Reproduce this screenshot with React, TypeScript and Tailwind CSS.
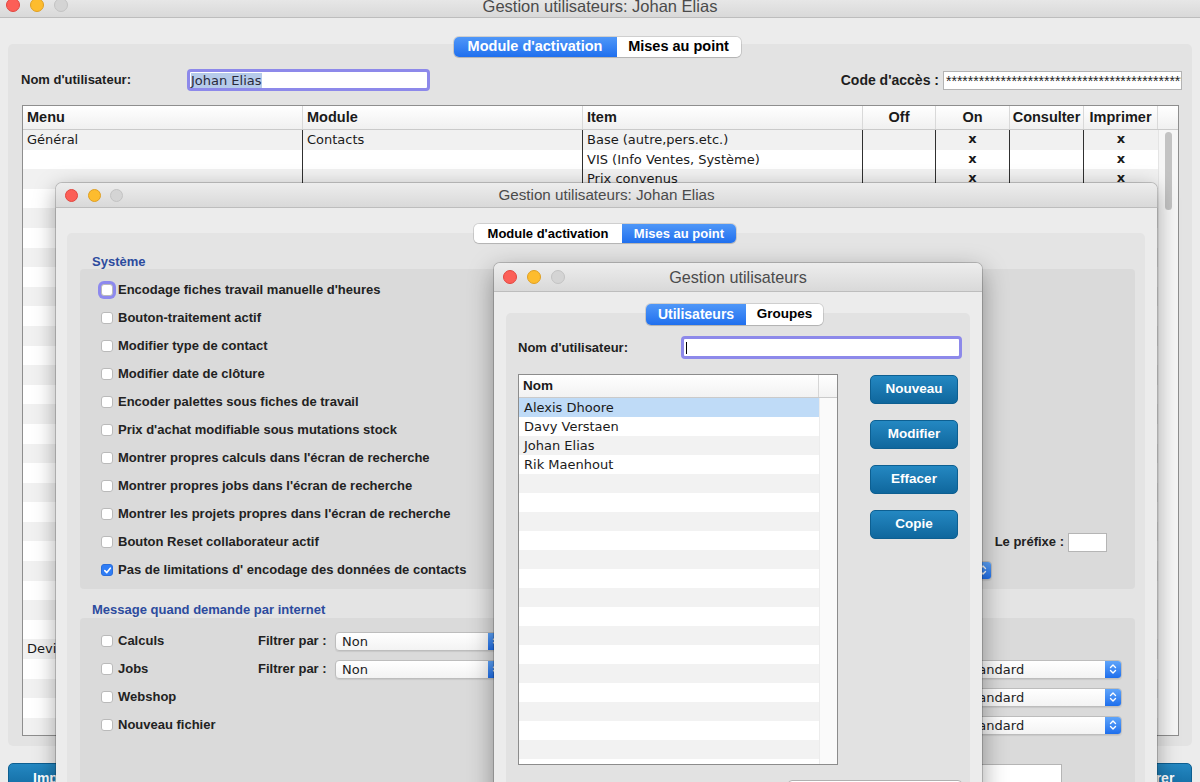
import React from "react";

const B = "font-['Liberation_Sans',Arial,sans-serif] font-bold";
const R = "font-['DejaVu_Sans',Verdana,sans-serif]";
const T = "font-['Liberation_Sans',Arial,sans-serif]";

function Lights({ size, gap }: { size: string; gap: string }) {
  return (
    <div className={`flex items-center ${gap}`}>
      <span className={`${size} rounded-full bg-[#fc5f57] border border-[#e2463f]`} />
      <span className={`${size} rounded-full bg-[#fdbc2e] border border-[#df9f23]`} />
      <span className={`${size} rounded-full bg-[#d4d4d4] border border-[#c3c3c3]`} />
    </div>
  );
}

function TitleBar({ title, h, size, gap, pl, text, shift = "" }: { title: string; h: string; size: string; gap: string; pl: string; text: string; shift?: string }) {
  return (
    <div className={`relative ${h} flex items-center ${pl} bg-gradient-to-b from-[#ededed] to-[#d9d9d9] border-b border-[#bdbdbd] rounded-t-[6px]`}>
      <Lights size={size} gap={gap} />
      <div className={`absolute inset-0 flex items-center justify-center ${shift} ${T} ${text} text-[#4b4b4b]`}>{title}</div>
    </div>
  );
}

function Check({ checked, focus }: { checked?: boolean; focus?: boolean }) {
  return (
    <span
      className={`w-[12px] h-[12px] shrink-0 rounded-[3px] flex items-center justify-center ${
        checked ? "bg-[#2f7df6] border border-[#2a6edb]" : "bg-white border border-[#bababa]"
      } ${focus ? "ring-[3px] ring-[#8d89ee]" : ""}`}
    >
      {checked && (
        <svg width="9" height="9" viewBox="0 0 9 9">
          <path d="M1.8 4.6 L3.8 6.6 L7.3 2.2" stroke="white" strokeWidth="1.6" fill="none" strokeLinecap="round" strokeLinejoin="round" />
        </svg>
      )}
    </span>
  );
}

function Select({ value, w }: { value: string; w: string }) {
  return (
    <div className={`${w} h-[19px] flex rounded-[4px] border border-[#bdbdbd] bg-gradient-to-b from-white to-[#f3f3f3] overflow-hidden shadow-[0_1px_1px_rgba(0,0,0,0.08)]`}>
      <span className={`flex-1 pl-[6px] ${R} text-[13px] leading-[17px] text-[#222]`}>{value}</span>
      <span className="w-[16px] flex items-center justify-center bg-gradient-to-b from-[#5ea4fa] to-[#1d6eec]">
        <svg width="8" height="12" viewBox="0 0 8 12">
          <path d="M1.5 4.5 L4 2 L6.5 4.5 M1.5 7.5 L4 10 L6.5 7.5" stroke="white" strokeWidth="1.4" fill="none" strokeLinecap="round" strokeLinejoin="round" />
        </svg>
      </span>
    </div>
  );
}

function BlueButton({ label, w, h, text }: { label: string; w: string; h: string; text: string }) {
  return (
    <div className={`${w} ${h} rounded-[5px] flex items-center justify-center bg-gradient-to-b from-[#2488c2] to-[#0f679d] border border-[#0d5f91] ${B} ${text} text-white`}>
      {label}
    </div>
  );
}

const cols1 = ["w-[280px]", "w-[280px]", "w-[280px]", "w-[73px]", "w-[74px]", "w-[74px]", "w-[74px]"];
const heads1 = ["Menu", "Module", "Item", "Off", "On", "Consulter", "Imprimer"];
const rows1 = Array.from({ length: 31 }, (_, i) => {
  if (i === 0) return ["Général", "Contacts", "Base (autre,pers.etc.)", "", "x", "", "x"];
  if (i === 1) return ["", "", "VIS (Info Ventes, Système)", "", "x", "", "x"];
  if (i === 2) return ["", "", "Prix convenus", "", "x", "", "x"];
  if (i === 26) return ["Devis", "", "", "", "", "", ""];
  return ["", "", "", "", "", "", ""];
});

const sys = [
  "Encodage fiches travail manuelle d'heures",
  "Bouton-traitement actif",
  "Modifier type de contact",
  "Modifier date de clôture",
  "Encoder palettes sous fiches de travail",
  "Prix d'achat modifiable sous mutations stock",
  "Montrer propres calculs dans l'écran de recherche",
  "Montrer propres jobs dans l'écran de recherche",
  "Montrer les projets propres dans l'écran de recherche",
  "Bouton Reset collaborateur actif",
  "Pas de limitations d' encodage des données de contacts",
];

const users = ["Alexis Dhoore", "Davy Verstaen", "Johan Elias", "Rik Maenhout"];

function WindowOne() {
  return (
    <div className="absolute left-0 top-[-8px] w-[1200px] h-[800px] bg-[#ececec]">
      <TitleBar title="Gestion utilisateurs: Johan Elias" h="h-[26px]" size="w-[14px] h-[14px]" gap="gap-[10px]" pl="pl-[6px]" text="text-[16.5px]" shift="pt-[4px]" />
      <div className="px-[8px] pt-[19px]">
        <div className="relative z-10 flex justify-center pr-[6px]">
          <div className="flex h-[20px] rounded-[5px] shadow-[0_0_0_1px_rgba(0,0,0,0.12),0_1px_1px_rgba(0,0,0,0.1)] overflow-hidden">
            <div className={`w-[163px] flex items-center justify-center bg-gradient-to-b from-[#4f97f8] to-[#1f6fee] text-white ${B} text-[14.5px]`}>Module d'activation</div>
            <div className={`w-[124px] flex items-center justify-center bg-white text-black ${B} text-[14.5px]`}>Mises au point</div>
          </div>
        </div>
        <div className="-mt-[13px] rounded-[5px] bg-[#e3e3e3] pt-[25px] pl-[13px] pr-[10px] pb-[10px]">
          <div className="flex items-center h-[22px]">
            <span className={`w-[166px] ${B} text-[13px] text-[#1e1e1e]`}>Nom d'utilisateur:</span>
            <div className="w-[243px] h-[22px] rounded-[4px] border-[3px] border-[#8d89ea] bg-white flex items-center pl-[1px]">
              <span className={`${R} text-[13px] leading-[15px] bg-[#b6cbea] text-[#2a2a3a]`}>Johan Elias</span>
            </div>
            <span className={`ml-auto mr-[4px] ${B} text-[14px] text-[#1e1e1e]`}>Code d'accès :</span>
            <div className={`w-[239px] h-[19px] border border-[#b3b3b3] bg-white overflow-hidden whitespace-nowrap pl-[2px] ${T} text-[14px] leading-[19px] text-[#222]`}>
              {"*".repeat(50)}
            </div>
          </div>
          <div className="mt-[14px] ml-[1px] mr-[3px] h-[631px] border border-[#8e8e8e] bg-white flex flex-col overflow-hidden">
            <div className="flex h-[24px] shrink-0 bg-gradient-to-b from-white to-[#f0f0f0] border-b border-[#cacaca]">
              {heads1.map((h, i) => (
                <div
                  key={h}
                  className={`${cols1[i]} shrink-0 flex items-center border-r border-[#d9d9d9] ${i < 3 ? "pl-[4px]" : "justify-center"} ${B} text-[14.5px] text-[#1a1a1a]`}
                >
                  {h}
                </div>
              ))}
              <div className="flex-1" />
            </div>
            <div className="flex flex-1 min-h-0">
              <div className="flex flex-col">
                {rows1.map((r, ri) => (
                  <div key={ri} className={`flex h-[19.6px] shrink-0 ${ri % 2 === 0 ? "bg-[#f1f1f1]" : "bg-white"}`}>
                    {r.map((c, ci) => (
                      <div
                        key={ci}
                        className={`${cols1[ci]} shrink-0 whitespace-nowrap overflow-hidden ${ci < 6 ? "border-r border-[#303030]" : ""} ${
                          ci < 3 ? `pl-[4px] ${R} text-[13px] leading-[19.6px] text-[#1a1a1a]` : `text-center ${R} font-bold text-[13px] leading-[18px] text-[#1a1a1a]`
                        }`}
                      >
                        {c}
                      </div>
                    ))}
                  </div>
                ))}
              </div>
              <div className="flex-1 bg-[#f6f6f6] border-l border-[#e4e4e4] flex justify-center">
                <div className="mt-[2px] w-[7px] h-[78px] rounded-full bg-[#c3c3c3]" />
              </div>
            </div>
          </div>
        </div>
        <div className="mt-[17px] flex justify-between">
          <BlueButton label="Imprimer" w="w-[110px]" h="h-[30px]" text="text-[14px]" />
          <BlueButton label="Enregistrer" w="w-[110px]" h="h-[30px]" text="text-[14px]" />
        </div>
      </div>
    </div>
  );
}

function WindowTwo() {
  return (
    <div className="absolute left-[56px] top-[183px] w-[1101px] h-[620px] bg-[#ececec] rounded-t-[6px] shadow-[0_0_0_1px_rgba(0,0,0,0.18),0_6px_22px_rgba(0,0,0,0.35)]">
      <TitleBar title="Gestion utilisateurs: Johan Elias" h="h-[25px]" size="w-[13px] h-[13px]" gap="gap-[9.5px]" pl="pl-[9px]" text="text-[15.2px]" shift="pt-[1px]" />
      <div className="pl-[11px] pr-[12px] pt-[16px]">
        <div className="relative z-10 flex justify-center pr-[2px]">
          <div className="flex h-[19px] rounded-[5px] shadow-[0_0_0_1px_rgba(0,0,0,0.12),0_1px_1px_rgba(0,0,0,0.1)] overflow-hidden">
            <div className={`w-[148px] flex items-center justify-center bg-white text-black ${B} text-[13px]`}>Module d'activation</div>
            <div className={`w-[114px] flex items-center justify-center bg-gradient-to-b from-[#4f97f8] to-[#1f6fee] text-white ${B} text-[13px]`}>Mises au point</div>
          </div>
        </div>
        <div className="-mt-[10px] h-[600px] rounded-[5px] bg-[#e4e4e4] pt-[21px] pl-[13px] pr-[10px]">
          <div className={`ml-[12px] h-[15px] leading-[15px] ${B} text-[13px] text-[#2c4b9e]`}>Système</div>
          <div className="rounded-[4px] bg-[#dadada] pt-[7px] pb-[5px]">
            {sys.map((s, i) => (
              <div key={s} className="flex items-center h-[28px] pl-[21px]">
                <Check checked={i === 10} focus={i === 0} />
                <span className={`ml-[5px] ${B} text-[13px] text-[#222]`}>{s}</span>
                {i === 9 && (
                  <div className="ml-auto mr-[28px] flex items-center">
                    <span className={`${B} text-[13px] text-[#222] mr-[4px]`}>Le préfixe :</span>
                    <div className="w-[39px] h-[19px] bg-white border border-[#b5b5b5]" />
                  </div>
                )}
                {i === 10 && (
                  <div className="ml-auto mr-[143px]">
                    <Select value="Standard" w="w-[200px]" />
                  </div>
                )}
              </div>
            ))}
          </div>
          <div className={`mt-[13px] ml-[12px] h-[15px] leading-[15px] ${B} text-[13px] text-[#2c4b9e]`}>Message quand demande par internet</div>
          <div className="mt-[1px] h-[300px] rounded-[4px] bg-[#dadada] pt-[9px]">
            {["Calculs", "Jobs", "Webshop", "Nouveau fichier"].map((s, i) => (
              <div key={s} className="flex items-center h-[28px] pl-[21px]">
                <div className="w-[157px] flex items-center">
                  <Check />
                  <span className={`ml-[5px] ${B} text-[13px] text-[#222]`}>{s}</span>
                </div>
                {i < 2 && (
                  <>
                    <span className={`w-[77px] ${B} text-[13px] text-[#222]`}>Filtrer par :</span>
                    <Select value="Non" w="w-[170px]" />
                  </>
                )}
                {i > 0 && (
                  <div className="ml-auto mr-[13px]">
                    <Select value="Standard" w="w-[164px]" />
                  </div>
                )}
              </div>
            ))}
            <div className="mt-[25px] flex">
              <div className="ml-auto mr-[73px] w-[100px] h-[19px] bg-white border border-[#b5b5b5]" />
            </div>
          </div>
        </div>
      </div>
    </div>
  );
}

function WindowThree() {
  return (
    <div className="absolute left-[494px] top-[263px] w-[488px] h-[540px] bg-[#ececec] rounded-t-[6px] shadow-[0_0_0_1px_rgba(0,0,0,0.18),0_8px_26px_rgba(0,0,0,0.38)]">
      <TitleBar title="Gestion utilisateurs" h="h-[29px]" size="w-[14px] h-[14px]" gap="gap-[10px]" pl="pl-[9px]" text="text-[16.2px]" />
      <div className="px-[12px] pt-[12px]">
        <div className="relative z-10 flex justify-center pr-[7px]">
          <div className="flex h-[21px] rounded-[5px] shadow-[0_0_0_1px_rgba(0,0,0,0.12),0_1px_1px_rgba(0,0,0,0.1)] overflow-hidden">
            <div className={`w-[100px] flex items-center justify-center bg-gradient-to-b from-[#4f97f8] to-[#1f6fee] text-white ${B} text-[14px]`}>Utilisateurs</div>
            <div className={`w-[77px] flex items-center justify-center bg-white text-black ${B} text-[13.5px]`}>Groupes</div>
          </div>
        </div>
        <div className="-mt-[12px] h-[520px] rounded-[5px] bg-[#e2e2e2] pt-[24px] pl-[12px] pr-[8px]">
          <div className="flex items-center h-[21px]">
            <span className={`w-[163px] ${B} text-[13px] text-[#1e1e1e]`}>Nom d'utilisateur:</span>
            <div className="w-[281px] h-[23px] rounded-[4px] border-[3px] border-[#8d89ea] bg-white flex items-center pl-[2px]">
              <span className="w-[1px] h-[12px] bg-black" />
            </div>
          </div>
          <div className="mt-[16px] flex items-start">
            <div className="w-[320px] h-[391px] border border-[#8c8c8c] bg-white flex flex-col overflow-hidden">
              <div className="flex h-[23px] shrink-0 bg-gradient-to-b from-white to-[#f2f2f2] border-b border-[#cacaca]">
                <div className={`w-[300px] flex items-center pl-[4px] border-r border-[#d6d6d6] ${B} text-[13.5px] text-[#1a1a1a]`}>Nom</div>
              </div>
              <div className="flex flex-1 min-h-0">
                <div className="w-[300px] flex flex-col">
                  {Array.from({ length: 20 }, (_, i) => (
                    <div
                      key={i}
                      className={`h-[19px] shrink-0 pl-[5px] ${R} text-[13px] leading-[20px] text-[#1a1a1a] ${
                        i === 0 ? "bg-[#bfdbf7]" : i % 2 === 0 ? "bg-[#f2f2f2]" : "bg-white"
                      }`}
                    >
                      {users[i] ?? ""}
                    </div>
                  ))}
                </div>
                <div className="flex-1 bg-[#fafafa] border-l border-[#ececec]" />
              </div>
            </div>
            <div className="ml-[32px] pt-[1px] flex flex-col gap-[16px]">
              {["Nouveau", "Modifier", "Effacer", "Copie"].map((l) => (
                <BlueButton key={l} label={l} w="w-[88px]" h="h-[29px]" text="text-[13.5px]" />
              ))}
            </div>
          </div>
          <div className="mt-[15px] flex">
            <div className="ml-auto w-[174px] h-[24px] rounded-[4px] border border-[#b0b0b0] bg-white" />
          </div>
        </div>
      </div>
    </div>
  );
}

export default function App() {
  return (
    <div className="relative w-[1200px] h-[782px] overflow-hidden bg-[#ececec]">
      <WindowOne />
      <WindowTwo />
      <WindowThree />
    </div>
  );
}
